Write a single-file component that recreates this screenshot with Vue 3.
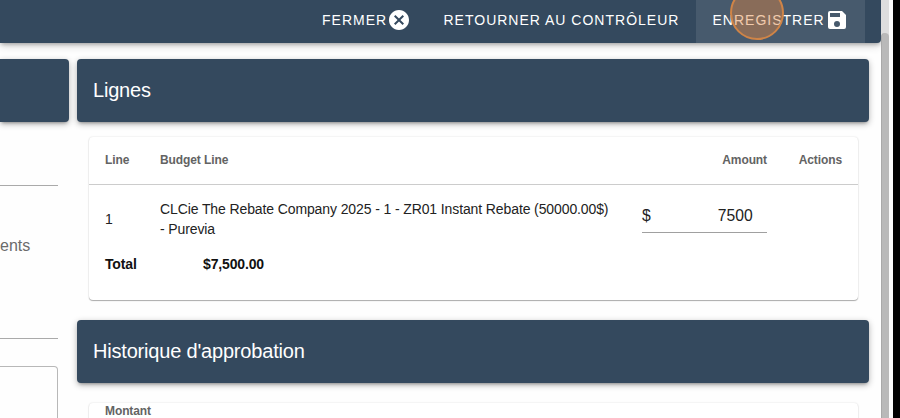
<script setup>
import { ref } from 'vue'

const amount = ref('7500')
</script>

<template>
  <div class="window">
    <div class="page">
      <header class="toolbar">
        <button class="action close">
          <span>FERMER</span>
          <svg class="icon" viewBox="0 0 24 24"><path fill="currentColor" d="M12 2C6.47 2 2 6.47 2 12s4.47 10 10 10 10-4.47 10-10S17.53 2 12 2zm5 13.59L15.59 17 12 13.41 8.41 17 7 15.59 10.59 12 7 8.41 8.41 7 12 10.59 15.59 7 17 8.41 13.41 12 17 15.59z" /></svg>
        </button>
        <button class="action back"><span>RETOURNER AU CONTRÔLEUR</span></button>
        <button class="action save">
          <span>ENREGISTRER</span>
          <svg class="icon" viewBox="0 0 24 24"><path fill="currentColor" d="M15 9H5V5h10m-3 14a3 3 0 0 1-3-3 3 3 0 0 1 3-3 3 3 0 0 1 3 3 3 3 0 0 1-3 3m5-16H5a2 2 0 0 0-2 2v14a2 2 0 0 0 2 2h14a2 2 0 0 0 2-2V7l-4-4z" /></svg>
          <i class="pointer"></i>
        </button>
      </header>

      <div class="columns">
        <aside class="side">
          <div class="banner"></div>
          <div class="field first"></div>
          <div class="field second"><span>ents</span></div>
          <div class="outlined"></div>
        </aside>

        <main class="main">
          <h2 class="banner">Lignes</h2>
          <section class="card lines">
            <div class="row head">
              <span>Line</span>
              <span>Budget Line</span>
              <span class="right">Amount</span>
              <span class="right">Actions</span>
            </div>
            <div class="row body">
              <span class="num">1</span>
              <p class="desc">CLCie The Rebate Company 2025 - 1 - ZR01 Instant Rebate (50000.00$)<br />- Purevia</p>
              <label class="amount"><span>$</span><input v-model="amount" /></label>
            </div>
            <div class="total"><span>Total</span><span>$7,500.00</span></div>
          </section>
          <h2 class="banner">Historique d'approbation</h2>
          <section class="card history"><span>Montant</span></section>
        </main>
      </div>
    </div>
    <div class="scrollbar"><div class="thumb"></div></div>
    <div class="gutter"></div>
  </div>
</template>

<style>
body { overflow: hidden; }
</style>

<style scoped>
.window {
  display: flex;
  width: 900px;
  height: 418px;
  overflow: hidden;
  background: #000;
  color: #222;
  font-family: "Liberation Sans", Arial, sans-serif;
}
.window, .window * { box-sizing: border-box; }
.page {
  width: 881px;
  height: 418px;
  overflow: hidden;
  background: #fefefe;
}
.toolbar {
  position: relative;
  display: flex;
  justify-content: flex-end;
  height: 43px;
  padding-right: 16px;
  border-radius: 0 0 4px 0;
  background: #34495e;
  box-shadow: 0 2px 4px -1px rgba(0, 0, 0, .3), 0 3px 8px rgba(0, 0, 0, .16);
}
.action {
  position: relative;
  display: flex;
  align-items: center;
  height: 43px;
  padding: 0 0 4px;
  border: 0;
  background: none;
  color: #fff;
  font: 14px/20px "Liberation Sans", Arial, sans-serif;
  letter-spacing: 1px;
  white-space: nowrap;
}
.action span { flex: none; }
.close { width: 121.5px; }
.back { width: 252.5px; }
.save { width: 169px; padding-left: 16.5px; background: #475a6d; }
.icon { flex: none; width: 24px; height: 24px; }
.pointer {
  position: absolute;
  left: 34px;
  top: -14px;
  width: 54px;
  height: 54px;
  border: 2px solid #cf8447;
  border-radius: 50%;
  background: rgba(226, 132, 62, .43);
}
.columns { display: flex; gap: 8px; padding-top: 16px; }
.side { width: 69px; }
.banner {
  height: 63px;
  margin: 0;
  padding: 0 16px;
  border-radius: 4px;
  background: #34495e;
  color: #fff;
  font-size: 20px;
  font-weight: 400;
  letter-spacing: -.19px;
  line-height: 63px;
  box-shadow: 0 3px 3px -2px rgba(0, 0, 0, .25), 0 2px 6px rgba(0, 0, 0, .3);
}
.side .banner { border-radius: 0 4px 4px 0; }
.field { width: 58px; border-bottom: 1px solid #aaa; }
.first { height: 64px; }
.second {
  height: 153px;
  padding-top: 50px;
  color: #6b6b6b;
  font-size: 16px;
  line-height: 20px;
}
.outlined {
  width: 58px;
  height: 80px;
  margin-top: 27px;
  border: 1px solid #b8b8b8;
  border-left: 0;
  border-radius: 0 4px 0 0;
}
.main { width: 792px; }
.card {
  width: 769px;
  margin-left: 12px;
  border-radius: 4px;
  background: #fff;
  box-shadow: 0 1px 1px rgba(0, 0, 0, .3), 0 0 2px rgba(0, 0, 0, .14);
}
.lines { height: 163px; margin-top: 15px; margin-bottom: 20px; }
.row {
  display: grid;
  grid-template-columns: 55px 482px 125px 75px;
  padding: 0 16px;
}
.head {
  height: 48px;
  border-bottom: 1px solid #ccc;
  color: #636363;
  font-size: 12px;
  font-weight: 700;
  letter-spacing: -.1px;
  line-height: 46px;
}
.right { text-align: right; }
.body { height: 63px; font-size: 14px; letter-spacing: -.11px; line-height: 20px; }
.num { padding-top: 24px; }
.desc { margin: 0; padding-top: 14px; white-space: nowrap; }
.amount {
  display: flex;
  align-items: center;
  height: 33px;
  margin-top: 15px;
  border-bottom: 1px solid #a0a0a0;
  font-size: 15.7px;
  letter-spacing: 0;
}
.amount input {
  width: 102px;
  padding: 0;
  border: 0;
  outline: 0;
  background: none;
  color: inherit;
  font: inherit;
  text-align: right;
}
.total {
  display: flex;
  padding: 6px 16px;
  color: #111;
  font-size: 14px;
  font-weight: 700;
  letter-spacing: -.15px;
  line-height: 20px;
}
.total span:first-child { width: 98px; }
.history {
  height: 60px;
  margin-top: 20px;
  padding: 0 16px;
  color: #636363;
  font-size: 12px;
  font-weight: 700;
  letter-spacing: -.1px;
  line-height: 16px;
}
.scrollbar { width: 8px; padding-top: 33px; background: #dedede; }
.thumb { height: 400px; border-radius: 4px; background: #b9b9b9; border-left: 1px solid #a9a9a9; }
.gutter { width: 4px; background: #fafafa; }
</style>
